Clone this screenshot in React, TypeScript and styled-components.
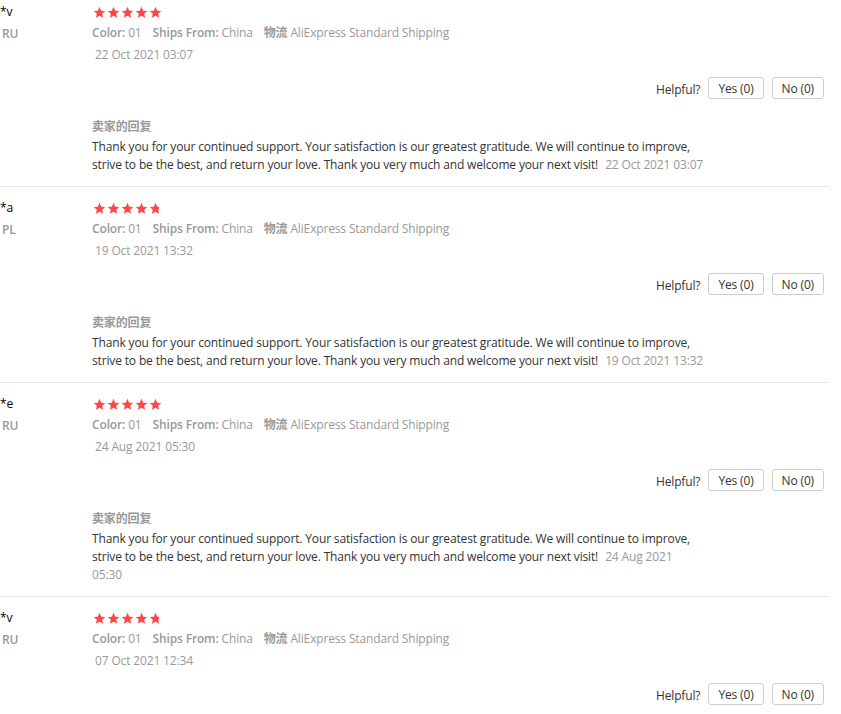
import styled, { createGlobalStyle } from "styled-components";

const GlobalStyle = createGlobalStyle`
  body {
    margin: 0;
    background: #fff;
    font-family: "Open Sans", "Noto Sans CJK SC", sans-serif;
    font-size: 12px;
    letter-spacing: -0.15px;
    color: #333;
  }
`;

type Review = {
  name: string;
  country: string;
  rating: number;
  date: string;
  reply?: string;
  replyDate?: string;
};

const REPLY =
  "Thank you for your continued support. Your satisfaction is our greatest gratitude. We will continue to improve, strive to be the best, and return your love. Thank you very much and welcome your next visit!";

const reviews: Review[] = [
  { name: "*v", country: "RU", rating: 5, date: "22 Oct 2021 03:07", reply: REPLY, replyDate: "22 Oct 2021 03:07" },
  { name: "*a", country: "PL", rating: 4.75, date: "19 Oct 2021 13:32", reply: REPLY, replyDate: "19 Oct 2021 13:32" },
  { name: "*e", country: "RU", rating: 5, date: "24 Aug 2021 05:30", reply: REPLY, replyDate: "24 Aug 2021 05:30" },
  { name: "*v", country: "RU", rating: 4.75, date: "07 Oct 2021 12:34" },
];

function Star({ fill }: { fill: number }) {
  return (
    <StarBox>
      <StarClip style={{ width: `${fill * 100}%` }}>
        <svg width="13" height="13" viewBox="0 0 24 24">
          <path
            d="M12 1.5l3.1 7.1 7.6.7-5.8 5.1 1.8 7.5L12 17.9l-6.7 4 1.8-7.5-5.8-5.1 7.6-.7z"
            fill="#ff4747"
          />
        </svg>
      </StarClip>
    </StarBox>
  );
}

function Stars({ rating }: { rating: number }) {
  return (
    <StarRow>
      {[0, 1, 2, 3, 4].map((i) => (
        <Star key={i} fill={Math.max(0, Math.min(1, rating - i))} />
      ))}
    </StarRow>
  );
}

export default function App() {
  return (
    <>
      <GlobalStyle />
      <List>
        {reviews.map((r, i) => (
          <Item key={i}>
            <UserCol>
              <UserName>{r.name}</UserName>
              <Country>{r.country}</Country>
            </UserCol>
            <Content>
              <Stars rating={r.rating} />
              <Meta>
                <MetaItem>
                  <MetaLabel>Color:</MetaLabel> 01
                </MetaItem>
                <MetaItem>
                  <MetaLabel>Ships From:</MetaLabel> China
                </MetaItem>
                <MetaItem>
                  <MetaLabel>物流</MetaLabel> AliExpress Standard Shipping
                </MetaItem>
              </Meta>
              <ReviewDate>{r.date}</ReviewDate>
              <Helpful>
                <HelpfulLabel>Helpful?</HelpfulLabel>
                <VoteButton>Yes (0)</VoteButton>
                <VoteButton>No (0)</VoteButton>
              </Helpful>
              {r.reply && (
                <Reply>
                  <ReplyTitle>卖家的回复</ReplyTitle>
                  <ReplyText>
                    {r.reply}
                    <ReplyDate>{r.replyDate}</ReplyDate>
                  </ReplyText>
                </Reply>
              )}
            </Content>
          </Item>
        ))}
      </List>
    </>
  );
}

const List = styled.div`
  width: 829px;
  margin-top: -9px;
`;

const Item = styled.div`
  display: flex;
  padding: 14px 0 12px;
  border-bottom: 1px solid #e8e8e8;
`;

const UserCol = styled.div`
  width: 92px;
  flex: none;
  display: flex;
  flex-direction: column;
`;

const UserName = styled.div`
  color: #000;
  line-height: 16px;
  margin-top: -1px;
`;

const Country = styled.div`
  color: #999;
  font-weight: 600;
  line-height: 16px;
  margin: 6px 0 0 2px;
`;

const Content = styled.div`
  flex: 1;
  padding-right: 5px;
`;

const StarRow = styled.div`
  display: flex;
  gap: 1px;
  height: 14px;
  align-items: center;
  margin-left: 1px;
`;

const StarBox = styled.span`
  width: 13px;
  height: 13px;
  display: inline-block;
`;

const StarClip = styled.span`
  display: block;
  overflow: hidden;
  height: 13px;
`;

const Meta = styled.div`
  display: flex;
  gap: 11px;
  margin-top: 4px;
  line-height: 20px;
  color: #999;
`;

const MetaItem = styled.span`
  white-space: nowrap;
`;

const MetaLabel = styled.span`
  font-weight: 600;
`;

const ReviewDate = styled.div`
  color: #999;
  line-height: 20px;
  margin: 2px 0 0 3px;
`;

const Helpful = styled.div`
  display: flex;
  justify-content: flex-end;
  align-items: center;
  gap: 8px;
  margin-top: 12px;
`;

const HelpfulLabel = styled.span`
  color: #333;
  margin-top: 2px;
`;

const VoteButton = styled.button`
  height: 22px;
  padding: 0 9px;
  border: 1px solid #ccc;
  border-radius: 3px;
  background: #fff;
  font-family: "Open Sans", sans-serif;
  font-size: 12px;
  letter-spacing: -0.15px;
  color: #333;
`;

const Reply = styled.div`
  margin-top: 19px;
`;

const ReplyTitle = styled.div`
  color: #999;
  font-weight: 600;
  line-height: 18px;
`;

const ReplyText = styled.div`
  width: 612px;
  margin-top: 2px;
  line-height: 18px;
  color: #333;
`;

const ReplyDate = styled.span`
  color: #999;
  margin-left: 7px;
`;
